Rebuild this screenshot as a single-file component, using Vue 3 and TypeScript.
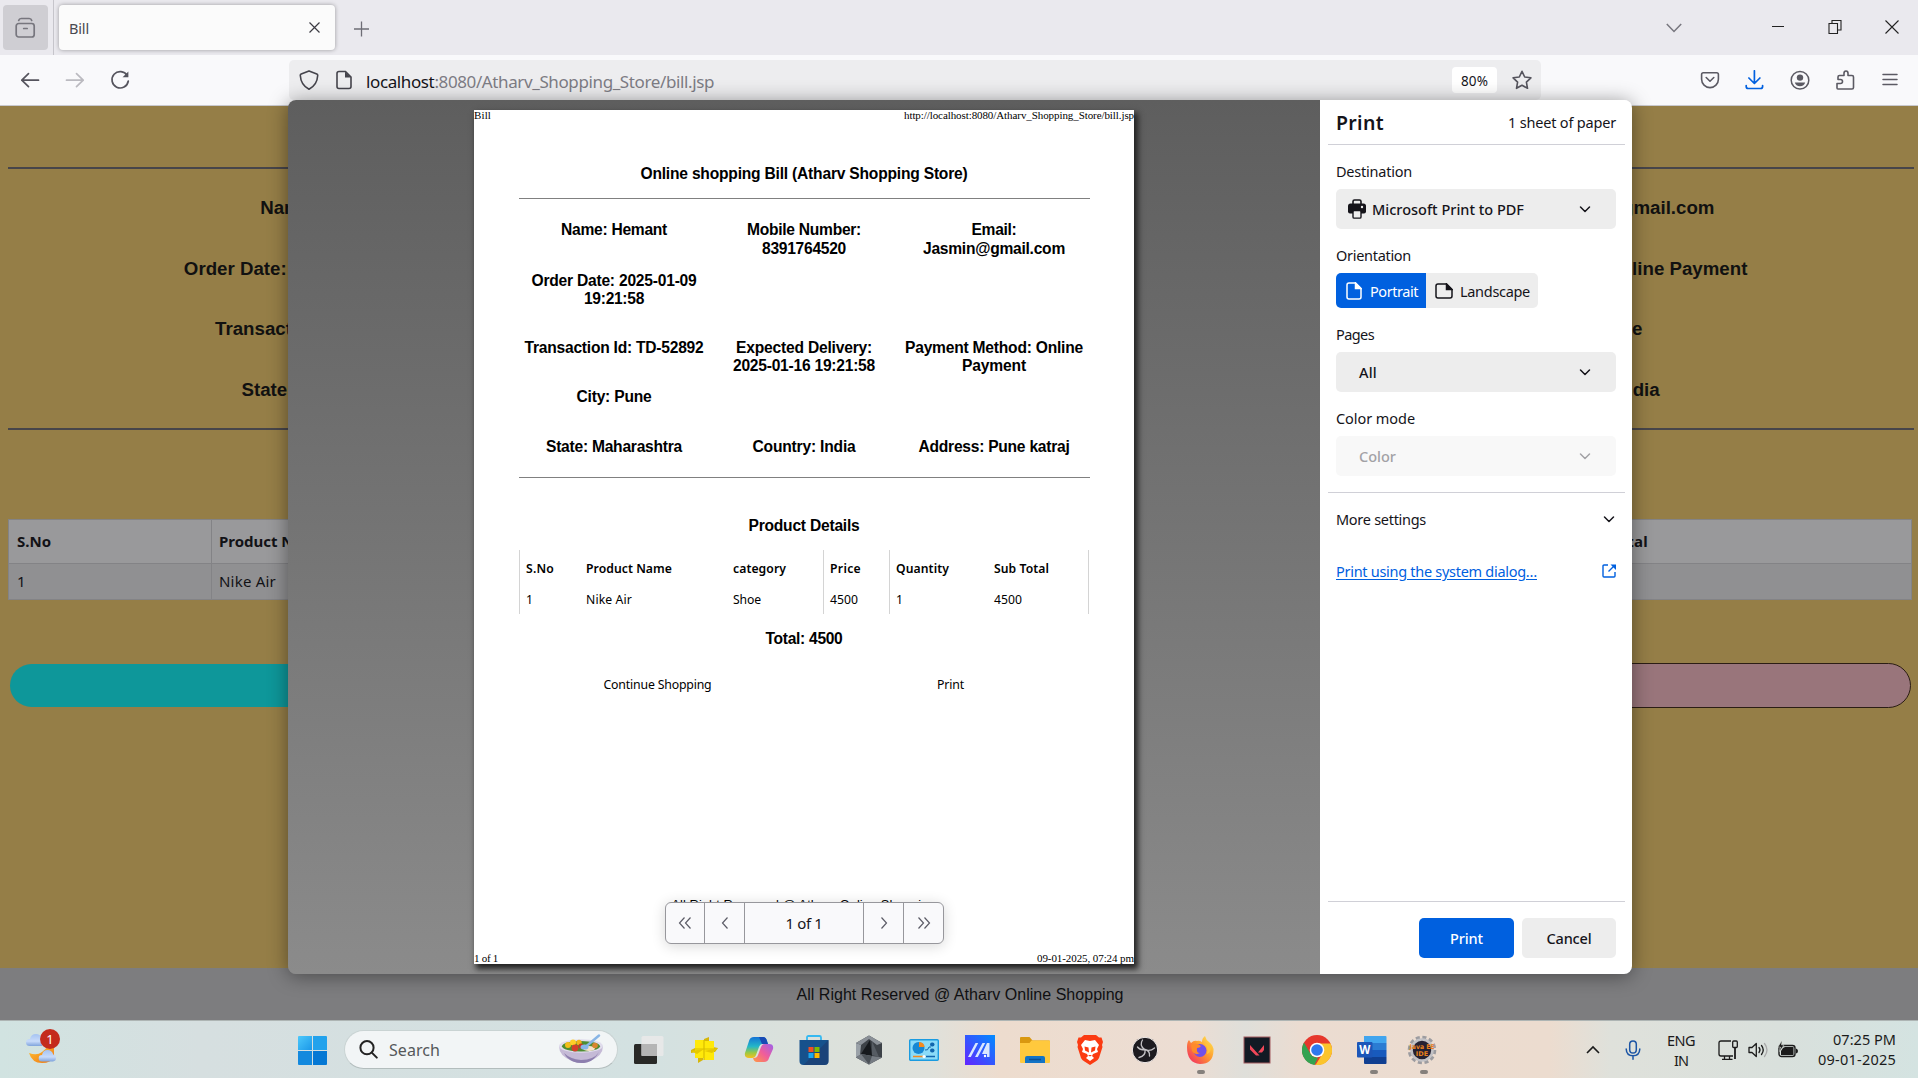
<script setup lang="ts">
import type { Directive } from 'vue'

// Tunes letter spacing so that a label takes exactly the given width in pixels.
const vFit: Directive<HTMLElement, number> = {
  mounted(el, binding) {
    const count = (el.textContent ?? '').length
    const width = el.getBoundingClientRect().width
    if (count > 0) el.style.letterSpacing = `${(binding.value - width) / count}px`
  },
}

interface Line { text: string; width: number }

const billCells: Line[][] = [
  [{ text: 'Name: Hemant', width: 106 }],
  [{ text: 'Mobile Number:', width: 114 }, { text: '8391764520', width: 84 }],
  [{ text: 'Email:', width: 45 }, { text: 'Jasmin@gmail.com', width: 142 }],
  [{ text: 'Order Date: 2025-01-09', width: 165 }, { text: '19:21:58', width: 60 }],
  [],
  [],
  [{ text: 'Transaction Id: TD-52892', width: 179 }],
  [{ text: 'Expected Delivery:', width: 136 }, { text: '2025-01-16 19:21:58', width: 142 }],
  [{ text: 'Payment Method: Online', width: 178 }, { text: 'Payment', width: 64 }],
  [{ text: 'City: Pune', width: 75 }],
  [],
  [],
  [{ text: 'State: Maharashtra', width: 136 }],
  [{ text: 'Country: India', width: 103 }],
  [{ text: 'Address: Pune katraj', width: 151 }],
]

const products = [
  { head: 'S.No', hw: 28, value: '1', vw: 6 },
  { head: 'Product Name', hw: 86, value: 'Nike Air', vw: 46 },
  { head: 'category', hw: 53, value: 'Shoe', vw: 28 },
  { head: 'Price', hw: 31, value: '4500', vw: 28 },
  { head: 'Quantity', hw: 53, value: '1', vw: 6 },
  { head: 'Sub Total', hw: 55, value: '4500', vw: 28 },
]
</script>

<template>
  <div class="screen">
    <header class="tabs">
      <div class="view-btn">
        <svg width="22" height="22" viewBox="0 0 22 22" fill="none" stroke="#77767e" stroke-width="1.7" stroke-linecap="round">
          <rect x="1.200" y="6.500" width="18" height="13.500" rx="2.500" /><path d="M3.700 3.500 Q4.200 1.500 6.200 1.500 H14.200 Q16.200 1.500 16.700 3.500" /><path d="M8.700 11.500h3.500" />
        </svg>
      </div>
      <i class="tab-sep"></i>
      <div class="tab">
        <span v-fit="20">Bill</span>
        <svg width="12" height="12" viewBox="0 0 12 12" stroke="#3c3b43" stroke-width="1.200"><path d="M1.500 .5l10 10M11.500 .5L1.500 10.500" /></svg>
      </div>
      <svg class="plus" width="16" height="16" viewBox="0 0 16 16" stroke="#6e6d76" stroke-width="1.300"><path d="M8.500 .5v15M1 8h15" /></svg>
      <svg class="list" width="16" height="10" viewBox="0 0 16 10" fill="none" stroke="#77767e" stroke-width="1.500"><path d="M.8 1l7.200 7.500L15.200 1" /></svg>
      <svg class="win min" width="14" height="14" viewBox="0 0 14 14" stroke="#222" fill="none"><path d="M1 6.500h12" /></svg>
      <svg class="win max" width="14" height="14" viewBox="0 0 14 14" stroke="#222" fill="none" stroke-width="1.100"><path d="M1 3.500h8.500v10H1zM4 3.500v-3h9v9.500H9.500" /></svg>
      <svg class="win cls" width="14" height="14" viewBox="0 0 14 14" stroke="#222" fill="none" stroke-width="1.100"><path d="M.5.5l13 13M13.500.5l-13 13" /></svg>
    </header>

    <nav class="toolbar">
      <svg width="20" height="20" viewBox="0 0 20 20" fill="none" stroke="#55545d" stroke-width="1.700" stroke-linecap="round" stroke-linejoin="round"><path d="M18.500 10.200H1.800M8.500 3.700L1.800 10.200l6.700 6.500" /></svg>
      <svg width="20" height="20" viewBox="0 0 20 20" fill="none" stroke="#bbbac0" stroke-width="1.700" stroke-linecap="round" stroke-linejoin="round"><path d="M1.500 10.200h16.700M11.500 3.700l6.700 6.500-6.700 6.500" /></svg>
      <svg width="20" height="20" viewBox="0 0 20 20" fill="none" stroke="#55545d" stroke-width="1.700" stroke-linecap="round"><path d="M17.200 5.500A8.200 8.200 0 1 0 18.300 11" /><path d="M18.400 1.500v5.800h-5.800z" fill="#55545d" stroke="none" /></svg>
      <div class="url">
        <svg width="20" height="20" viewBox="0 0 20 20" fill="none" stroke="#45444c" stroke-width="1.600" stroke-linejoin="round"><path d="M10 .9L17.800 4q1 .5 .9 1.500-.5 9.500-8.700 13.700Q1.800 15 1.300 5.500 1.200 4.500 2.200 4z" /></svg>
        <svg class="doc" width="20" height="20" viewBox="0 0 20 20" fill="none" stroke="#45444c" stroke-width="1.600"><path d="M11.500 1.500H5q-2 0-2 2v13q0 2 2 2h10q2 0 2-2V7z" /><path d="M11 1.500l6 6h-6z" fill="#45444c" stroke="none" /></svg>
        <span v-fit="348" class="addr"><b>localhost</b>:8080/Atharv_Shopping_Store/bill.jsp</span>
        <span class="zoom"><span v-fit="27">80%</span></span>
        <svg width="20" height="20" viewBox="0 0 20 20" fill="none" stroke="#55545d" stroke-width="1.600" stroke-linejoin="round"><path d="M10 1.300l2.700 5.700 6.200.8-4.500 4.300 1.100 6.200L10 15.300l-5.500 3 1.100-6.200L1.100 7.800 7.300 7z" /></svg>
      </div>
      <svg class="t1" width="20" height="20" viewBox="0 0 20 20" fill="none" stroke="#5b5a63" stroke-width="1.600" stroke-linecap="round" stroke-linejoin="round"><path d="M3.300 2.700h13.400q1.700 0 1.700 1.700v4.800a8.400 8.400 0 0 1-16.800 0V4.400q0-1.700 1.700-1.700z" /><path d="M6.200 7.500L10 11.200l3.800-3.700" /></svg>
      <svg class="t2" width="20" height="20" viewBox="0 0 20 20" fill="none" stroke="#0060df" stroke-width="1.700" stroke-linecap="round" stroke-linejoin="round"><path d="M10.400 .8v12.500M4.900 8l5.500 5.500L15.900 8M2.200 15.500v1q0 2 2 2h12.400q2 0 2-2v-1" /></svg>
      <svg class="t3" width="20" height="20" viewBox="0 0 20 20" fill="none" stroke="#5b5a63" stroke-width="1.500"><circle cx="10" cy="10.200" r="8.800" /><circle cx="10" cy="7.600" r="3.200" fill="#5b5a63" stroke="none" /><path d="M4.800 12.500h10.400q-1 3.700-5.200 3.700t-5.200-3.700z" fill="#5b5a63" stroke="none" /></svg>
      <svg class="t4" width="20" height="20" viewBox="0 0 20 20" fill="none" stroke="#5b5a63" stroke-width="1.600" stroke-linejoin="round"><path d="M3 19h14q1.500 0 1.500-1.500V7q0-1.500-1.500-1.500h-4V3.300q0-2.300-2-2.300t-2 2.300v2.200H4.500Q3 5.500 3 7v2.500h2.500q2 0 2 2t-2 2H2V18q0 1 1 1z" /></svg>
      <svg class="t5" width="20" height="20" viewBox="0 0 20 20" stroke="#5b5a63" stroke-width="1.500" stroke-linecap="round"><path d="M3 4.500h14M3 9.500h14M3 14.500h14" /></svg>
    </nav>

    <main class="page">
      <div class="rule first"></div>
      <div class="facts">
        <h3>Name: Hemant</h3><h3></h3><h3>Email: Jasmin@gmail.com</h3>
        <h3>Order Date: 2025-01-09 19:21:58</h3><h3></h3><h3>Payment Method: Online Payment</h3>
        <h3>Transaction Id: TD-52892</h3><h3></h3><h3>City: Pune</h3>
        <h3>State: Maharashtra</h3><h3></h3><h3>Country: India</h3>
      </div>
      <div class="rule"></div>
      <div class="wide-table">
        <div class="wr head"><span><em v-fit="34">S.No</em></span><span><em v-fit="107">Product Name</em></span><span></span><span><em v-fit="71">Sub Total</em></span></div>
        <div class="wr"><span>1</span><span><em v-fit="57">Nike Air</em></span><span></span><span></span></div>
      </div>
      <div class="pills"><div class="pill teal"></div><div class="pill pink"></div></div>
      <footer class="foot"><span v-fit="327">All Right Reserved @ Atharv Online Shopping</span></footer>
    </main>

    <section class="dialog">
      <div class="preview">
        <article class="paper">
          <div class="edge"><span v-fit="17">Bill</span><span v-fit="230">http://localhost:8080/Atharv_Shopping_Store/bill.jsp</span></div>
          <div class="sheet">
            <h4 class="title"><span v-fit="327">Online shopping Bill (Atharv Shopping Store)</span></h4>
            <div class="hr"></div>
            <div class="cells">
              <div v-for="(cell, i) in billCells" :key="i" class="cell">
                <div v-for="line in cell" :key="line.text"><span v-fit="line.width">{{ line.text }}</span></div>
              </div>
            </div>
            <div class="hr"></div>
            <h4 class="details"><span v-fit="111">Product Details</span></h4>
            <div class="ptable">
              <div v-for="p in products" :key="p.head" class="pcol">
                <div class="ph"><span v-fit="p.hw">{{ p.head }}</span></div>
                <div class="pv"><span v-fit="p.vw">{{ p.value }}</span></div>
              </div>
            </div>
            <h4 class="total"><span v-fit="77">Total: 4500</span></h4>
            <div class="actions"><div><span v-fit="108">Continue Shopping</span></div><div><span v-fit="27">Print</span></div></div>
            <div class="rights"><span v-fit="264">All Right Reserved @ Atharv Online Shopping</span></div>
          </div>
          <div class="edge low"><span v-fit="24">1 of 1</span><span v-fit="97">09-01-2025, 07:24 pm</span></div>
        </article>
        <div class="pager">
          <span><svg width="14" height="14" viewBox="0 0 14 14"><path d="M6.500 1.500L1.500 7l5 5.500M12.500 1.500l-5 5.500 5 5.500" /></svg></span>
          <span><svg width="14" height="14" viewBox="0 0 14 14"><path d="M9.500 1.500L4.500 7l5 5.500" /></svg></span>
          <span class="mid"><em v-fit="37">1 of 1</em></span>
          <span><svg width="14" height="14" viewBox="0 0 14 14"><path d="M4.500 1.500l5 5.500-5 5.500" /></svg></span>
          <span><svg width="14" height="14" viewBox="0 0 14 14"><path d="M1.500 1.500l5 5.500-5 5.500M7.500 1.500l5 5.500-5 5.500" /></svg></span>
        </div>
      </div>

      <aside class="panel">
        <div class="phead"><h2><span v-fit="48">Print</span></h2><span v-fit="108">1 sheet of paper</span></div>
        <div class="form">
          <label class="l1"><span v-fit="76">Destination</span></label>
          <div class="select dest">
            <svg width="18" height="20" viewBox="0 0 18 20"><path d="M5 5V2.500Q5 1 6.500 1h5Q13 1 13 2.500V5" fill="none" stroke="#15141a" stroke-width="1.600" /><path d="M2.500 4.500h13Q18 4.500 18 7v5.500q0 2-2 2H2q-2 0-2-2V7q0-2.500 2.500-2.500z" fill="#15141a" /><rect x="5" y="11.500" width="8" height="7.600" rx="1.200" fill="#eee" stroke="#15141a" stroke-width="1.400" /><circle cx="14" cy="8" r="1.200" fill="#eee" /></svg>
            <span v-fit="152">Microsoft Print to PDF</span>
            <svg class="chev" width="12" height="8" viewBox="0 0 12 8"><path d="M1.500 2L6 6.500l4.500-4.500" /></svg>
          </div>
          <label class="l2"><span v-fit="75">Orientation</span></label>
          <div class="orient">
            <div class="on"><svg width="16" height="18" viewBox="0 0 16 18" fill="none" stroke="#fff" stroke-width="1.500"><path d="M9.500 1H3Q1 1 1 3v12q0 2 2 2h10q2 0 2-2V6.500z" /><path d="M9.500 1l5.500 5.500H9.500z" fill="#fff" /></svg><span v-fit="48">Portrait</span></div>
            <div class="off"><svg width="18" height="16" viewBox="0 0 18 16" fill="none" stroke="#15141a" stroke-width="1.500"><path d="M11.500 1H3Q1 1 1 3v10q0 2 2 2h12q2 0 2-2V6.500z" /><path d="M11.500 1L17 6.500h-5.500z" fill="#15141a" /></svg><span v-fit="70">Landscape</span></div>
          </div>
          <label class="l3"><span v-fit="38">Pages</span></label>
          <div class="select plain"><span v-fit="18">All</span><svg class="chev" width="12" height="8" viewBox="0 0 12 8"><path d="M1.500 2L6 6.500l4.500-4.500" /></svg></div>
          <label class="l4"><span v-fit="79">Color mode</span></label>
          <div class="select plain disabled"><span v-fit="37">Color</span><svg class="chev" width="12" height="8" viewBox="0 0 12 8"><path d="M1.500 2L6 6.500l4.500-4.500" /></svg></div>
        </div>
        <div class="more"><span v-fit="90">More settings</span><svg class="chev" width="12" height="8" viewBox="0 0 12 8"><path d="M1.500 2L6 6.500l4.500-4.500" /></svg></div>
        <div class="sys"><a v-fit="201">Print using the system dialog…</a><svg width="14" height="14" viewBox="0 0 14 14" fill="none" stroke="#0060df" stroke-width="1.400"><path d="M6 1H2Q1 1 1 2v10q0 1 1 1h10q1 0 1-1V8M6.500 7.500L12 2" /><path d="M8.500.5H14V6z" fill="#0060df" stroke="none" /></svg></div>
        <div class="buttons"><div class="btn primary"><span v-fit="33">Print</span></div><div class="btn"><span v-fit="45">Cancel</span></div></div>
      </aside>
    </section>

    <footer class="taskbar">
      <svg class="weather" width="36" height="44" viewBox="0 0 36 44">
        <defs>
          <linearGradient id="cloud" x1="0" y1="0" x2="0" y2="1"><stop offset="0" stop-color="#a5c3f2" /><stop offset=".6" stop-color="#c8dbfa" /><stop offset="1" stop-color="#7fa3dc" /></linearGradient>
          <linearGradient id="moon" x1="0" y1="0" x2="1" y2="1"><stop offset="0" stop-color="#ffc233" /><stop offset="1" stop-color="#ee7413" /></linearGradient>
        </defs>
        <path d="M4 27q8 3 13-1 4-3 5-5h7v10q-3 6-12 6Q7 37 4 27z" fill="url(#moon)" />
        <path d="M5 20q-4 0-4-3.500T5 13q1-5 6-5 4 0 6 4v8z" fill="url(#cloud)" />
        <path d="M17 35.500q-3.300 0-3.300-3.300T17 29q1-5 5.500-5t5.700 4.500q2.800.5 2.800 3.500t-3 3.500z" fill="url(#cloud)" />
        <circle cx="25" cy="13" r="10" fill="#c42b1c" />
        <text x="25" y="17.800" font-size="13" fill="#fff" text-anchor="middle" font-family="Noto Sans">1</text>
      </svg>
      <svg class="start" width="29" height="29" viewBox="0 0 29 29">
        <defs><linearGradient id="win" x1="0" y1="0" x2="1" y2="1" gradientUnits="objectBoundingBox"><stop offset="0" stop-color="#4cc8fb" /><stop offset="1" stop-color="#1b98e8" /></linearGradient></defs>
        <path d="M1 0h13v14H0V1q0-1 1-1z" fill="url(#win)" /><path d="M15 0h13q1 0 1 1v13H15z" fill="#22a2ec" /><path d="M0 15h14v14H1q-1 0-1-1z" fill="#1389de" /><path d="M15 15h14v13q0 1-1 1H15z" fill="#0578d4" />
      </svg>
      <div class="search">
        <svg width="19" height="19" viewBox="0 0 19 19" fill="none" stroke="#222" stroke-width="2" stroke-linecap="round"><circle cx="8" cy="7.700" r="6.600" /><path d="M12.800 12.600l5 5" /></svg>
        <span v-fit="51">Search</span>
        <svg class="bowl" width="46" height="30" viewBox="0 0 46 30">
          <path d="M1 12q0 10 13 15 9 3.500 18 0 13-5 13-15z" fill="#c5bad6" /><path d="M6 19q6 6 17 7 13 0 18-8-5 9-12 10.500-8 1.500-14-1Q9 25 6 19z" fill="#8d7fae" />
          <ellipse cx="23" cy="12" rx="22" ry="6.800" fill="#e0dcec" /><ellipse cx="23" cy="12.300" rx="19" ry="5.200" fill="#4e8d32" />
          <circle cx="10" cy="11" r="3" fill="#f2bd1a" /><circle cx="15" cy="8.500" r="3" fill="#ffd028" /><circle cx="21" cy="8.500" r="2.700" fill="#f2b51a" /><circle cx="17" cy="14" r="3.400" fill="#d4402b" /><circle cx="23" cy="12" r="2.600" fill="#c33a2b" /><ellipse cx="31" cy="14.500" rx="6" ry="2.600" fill="#f7e2c8" /><circle cx="37" cy="11.500" r="2.800" fill="#d9862e" />
          <path d="M41 1.500L28 12.500" stroke="#88b5e6" stroke-width="2.400" stroke-linecap="round" /><ellipse cx="26.500" cy="13" rx="4" ry="2.600" fill="#86b6ea" />
        </svg>
      </div>
      <div class="apps">
        <svg viewBox="0 0 30 30"><rect y="9" width="23" height="20" rx="1.500" fill="#292927" /><rect x="7.500" y="1" width="22" height="20" rx="1.500" fill="#e9e9e9" opacity=".9" /><path d="M7.500 9H23v12H7.500z" fill="#b5b5b5" /></svg>
        <svg viewBox="0 0 30 30"><path d="M15 4l5-2v6h-5zM2 15l6-3v5l-6 1zM9 22h5v3l-5 3zM24 12l5 1-3 4h-3z" fill="#d6b60a" /><path d="M6 5h9v6H6zM6 11h19v9H6zM6 20h9v3H6zM15 6h10v6H15zM15 19h10v6H15z" fill="#ffe90a" /><path d="M15 5v20M6 14h19" stroke="#d9bf00" stroke-width="1.200" /><path d="M2 16l13-2-7 5zM29 13l-14 3 8 2z" fill="#e6c800" /></svg>
        <svg viewBox="0 0 30 30">
          <defs><linearGradient id="co1" x1="0" y1="0" x2="0" y2="1"><stop offset="0" stop-color="#1473d6" /><stop offset=".45" stop-color="#24b7c8" /><stop offset=".75" stop-color="#9bc944" /><stop offset="1" stop-color="#f8bf1c" /></linearGradient><linearGradient id="co2" x1="1" y1="0" x2="0" y2="1"><stop offset="0" stop-color="#9d61eb" /><stop offset=".5" stop-color="#f05d9b" /><stop offset="1" stop-color="#ff9a42" /></linearGradient></defs>
          <path d="M10 2h9q3 0 4 4l1 3h-6q-2 0-3 3l-3 8q-1 3-4 3H5q-5 0-4-5L5 6q1-4 5-4z" fill="url(#co1)" />
          <path d="M20 27h-7q-3 0-4-4h1q3 0 4-3l3-8q1-3 4-3h4q5 0 4 5l-4 9q-1 4-5 4z" fill="url(#co2)" />
          <path d="M15 2h4q3 0 4 4l1 3h-6z" fill="#184ab4" />
        </svg>
        <svg viewBox="0 0 30 30"><path d="M8 6V2.500Q8 1 9.500 1h11Q22 1 22 2.500V6" fill="none" stroke="#35b9f1" stroke-width="1.800" /><path d="M.5 5h29v21q0 4-4 4h-21q-4 0-4-4z" fill="#16518c" /><path d="M29.500 5v21q0 4-4 4h-21z" fill="#203b6c" opacity=".6" /><path d="M9.500 12h5v5h-5z" fill="#f25022" /><path d="M15.500 12h5v5h-5z" fill="#7fba00" /><path d="M9.500 18h5v5h-5z" fill="#18a8f0" /><path d="M15.500 18h5v5h-5z" fill="#ffb900" /></svg>
        <svg viewBox="0 0 30 30"><path d="M15 .5L28 8v14.500L15 29.500 2 22.500V8z" fill="#3d4248" /><path d="M15 .5L28 8l-5 2-8-6-8 6-5-2z" fill="#8a9097" /><path d="M2 8l5 2-1 10-4 2.500z" fill="#9aa1a8" /><path d="M18 6l7 16-7-2z" fill="#565c63" /><path d="M16 5L7 19l11 2z" fill="#16191d" /><path d="M2 22.500L7 19l11 2 10 1.500-13 7z" fill="#767c83" /><path d="M7 19l11 2-3 8.500z" fill="#4c5258" /></svg>
        <svg viewBox="0 0 30 30"><rect x=".7" y="4.700" width="28.600" height="20.600" rx="1" fill="#8bdbf8" stroke="#1a9be0" stroke-width="1.400" /><circle cx="9.500" cy="13" r="6" fill="#1688d4" /><path d="M10 12V7q5.500.5 5.500 5z" fill="#f58a1f" /><path d="M16 15q3 1 4-3h2" stroke="#1266ae" fill="none" /><rect x="21" y="7.500" width="4.500" height="4" rx="2" fill="#1266ae" /><rect x="21" y="13.500" width="4.500" height="4" rx="2" fill="#1266ae" /><path d="M4 21.500h11" stroke="#f58a1f" stroke-width="1.500" /><path d="M17 21.500h9" stroke="#1266ae" stroke-width="1.500" /><circle cx="15" cy="21.500" r="1.500" fill="#fff" /></svg>
        <svg viewBox="0 0 30 30"><defs><linearGradient id="asus" x1="1" y1="0" x2="0" y2="1"><stop offset="0" stop-color="#008cff" /><stop offset="1" stop-color="#6324ff" /></linearGradient></defs><path d="M0 0h30v30H0z" fill="url(#asus)" /><path d="M3 22L10.500 8h2.700L5.800 22zM10 22l7.500-14h2.700L12.800 22z" fill="#d9e7ff" /><path d="M17 19l5-11h2.500v14h-2.500v-3z" fill="#d9e7ff" /><circle cx="20" cy="21" r="1.200" fill="#fff" /></svg>
        <svg viewBox="0 0 30 30"><path d="M0 3q0-1 1-1h8.500l3 3.500H29q1 0 1 1V13H0z" fill="#d99810" /><path d="M0 8h9.500l2-2.500H29q1 0 1 1V27q0 1-1 1H1q-1 0-1-1z" fill="#ffc93d" /><path d="M5 28v-5q0-2 2-2h16q2 0 2 2v5z" fill="#1374c6" /><path d="M9 24.500h12" stroke="#0c4f91" stroke-width="1.500" /></svg>
        <svg viewBox="0 0 30 30"><path d="M9 0h12l3 2.500h2.500L28 7l-1 3 .5 2-3.500 11q-1 2-3.500 3.500L15 30l-5.500-3.500Q7 25 6 23L2.500 12 3 10 2 7l1.500-4.500H6z" fill="#fb3b12" /><path d="M15 6l5-1 4 5-2 4 1 3-5 2-1 2 2 2-4 3-4-3 2-2-1-2-5-2 1-3-2-4 4-5z" fill="#fff" /><path d="M9.500 11.500l4 1 .5 5-4-2zM20.500 11.500l-4 1-.5 5 4-2zM13 20h4l-2 1.500z" fill="#fb3b12" /></svg>
        <svg viewBox="0 0 30 30"><circle cx="15" cy="15" r="12.700" fill="#1d1b20" stroke="#f5efed" stroke-width="1" /><path d="M12.500 5q-3.500 5 2 9.500M15 14.500q5 2.500 9.500-1.500M15 14.500q1 6.500-6 8M15 14.500q5 1 4.500 6.500M15 14.500q-5 1-7.500-2.500" fill="none" stroke="#c3c1c4" stroke-width="1.300" stroke-linecap="round" /></svg>
        <svg viewBox="0 0 30 30"><defs><linearGradient id="ff" x1="1" y1="0" x2="0" y2="1"><stop offset="0" stop-color="#fff25a" /><stop offset=".45" stop-color="#ff9a2e" /><stop offset="1" stop-color="#f01d6b" /></linearGradient></defs><path d="M2 12q0-5 2-7l2 3q3-3 6-2 2-1 5 1 0-4 3-6 1 4 4 6 5 4 4.500 9Q28 29 15 29 2 28 2 12z" fill="url(#ff)" /><circle cx="15" cy="15.500" r="6.500" fill="#7250e8" /><path d="M6 10q5-3 10 1-1 2-4 2-1 5 3 5-5 3-8-2z" fill="#ff8a2a" /><path d="M19 8q5 5 3 11 5-2 4-8z" fill="#ffc43b" /></svg>
        <svg viewBox="0 0 30 30"><rect x="2" y="2" width="26" height="26" fill="#121a24" stroke="#a35b5f" /><path d="M8 10v4.500l6 6h3.500zM22 10v5l-2 2.500h-4z" fill="#f04758" /></svg>
        <svg viewBox="0 0 30 30"><circle cx="15" cy="15" r="15" fill="#e6372c" /><path d="M2 7.500l6.500 11.300Q11 23 16 22.500L12.500 30A15 15 0 0 1 2 7.500z" fill="#34a351" /><path d="M28.500 8.500H15q6 1 6.500 7 0 2-1.500 4L13.500 30A15 15 0 0 0 28.500 8.500z" fill="#fbc42c" /><circle cx="15" cy="15" r="7.300" fill="#fff" /><circle cx="15" cy="15" r="5.800" fill="#2f78ee" /></svg>
        <svg viewBox="0 0 30 30"><path d="M7 1h21.500q1 0 1 1v6H7z" fill="#41a5ee" /><path d="M7 8h22.500v7H7z" fill="#2b7cd3" /><path d="M7 15h22.500v7H7z" fill="#185abd" /><path d="M7 22h22.500v6q0 1-1 1H8q-1 0-1-1z" fill="#103f91" /><rect x="0" y="7" width="15.500" height="15.500" rx="1" fill="#1c56b8" /><text x="7.700" y="18.700" font-family="Noto Sans" font-weight="700" font-size="11.500" fill="#fff" text-anchor="middle">W</text></svg>
        <svg viewBox="0 0 30 30"><circle cx="15" cy="15" r="12.300" fill="none" stroke="#9c9ca0" stroke-width="4" stroke-dasharray="3.900 2.540" /><circle cx="15" cy="15" r="10.500" fill="#252132" stroke="#c2c2c6" stroke-width="2.600" /><text x="15" y="14" font-family="DejaVu Sans" font-size="6.500" font-weight="700" fill="#e9801c" text-anchor="middle" textLength="25" lengthAdjust="spacingAndGlyphs">Java EE</text><text x="15" y="20.500" font-family="DejaVu Sans" font-size="6.500" font-weight="700" fill="#e9801c" text-anchor="middle">IDE</text></svg>
      </div>
      <div class="dots"><i></i><i></i><i></i></div>
      <div class="tray">
        <svg width="14" height="10" viewBox="0 0 14 10" fill="none" stroke="#1b1b1b" stroke-width="1.600"><path d="M1 8l6-6 6 6" /></svg>
        <svg class="mic" width="16" height="20" viewBox="0 0 16 20" fill="none" stroke="#1c55a5" stroke-width="1.500" stroke-linecap="round"><rect x="4.700" y="1" width="6.600" height="12" rx="3.300" /><path d="M1.200 9q.3 6.800 6.800 6.800T14.800 9M8 16v3.200" /></svg>
        <div class="lang"><span v-fit="28">ENG</span><span v-fit="14">IN</span></div>
        <svg class="net" width="20" height="20" viewBox="0 0 20 20" fill="none" stroke="#1b1b1b" stroke-width="1.300"><path d="M13 1H3Q1 1 1 3v11q0 2 2 2h12M6.500 16v3M11.500 16v3M4 19.300h10.500" /><rect x="14.700" y="1" width="4.600" height="6.500" rx="1" /><path d="M17 7.500V19" stroke-width="1.800" /></svg>
        <svg class="vol" width="20" height="18" viewBox="0 0 20 18" fill="none" stroke="#1b1b1b" stroke-width="1.300" stroke-linejoin="round" stroke-linecap="round"><path d="M1 6.500h3L8.300 2.500v13L4 11.500H1zM11 6.500q2 2.500 0 5M13.500 4.500q3.500 4.500 0 9" /><path d="M16.500 2.500q5 6.500 0 13" stroke="#aaa" /></svg>
        <svg class="bat" width="20" height="18" viewBox="0 0 20 18"><rect x="1" y="4.500" width="16" height="11" rx="2.500" fill="none" stroke="#1b1b1b" stroke-width="1.400" /><path d="M5 7l2-1h8.500v8H3v-4z" fill="#1b1b1b" /><path d="M18 7.500q2 .5 2 2.500t-2 2.500z" fill="#1b1b1b" /><path d="M4 -.5L0 6h2.500L1.500 10.500 6 4H3.500z" fill="#1b1b1b" stroke="#dde2dd" stroke-width=".5" /></svg>
        <div class="clock"><span v-fit="63">07:25 PM</span><span v-fit="78">09-01-2025</span></div>
      </div>
    </footer>
  </div>
</template>

<style>
body { margin: 0; overflow: hidden; }
</style>

<style scoped>
* { box-sizing: border-box; }
.screen { width: 1918px; height: 1078px; position: relative; overflow: hidden; display: flex; flex-direction: column; font-family: "Noto Sans", sans-serif; color: #15141a; white-space: nowrap; }
svg { flex: none; display: block; }
span, em, a { display: inline-block; font-style: normal; }
h2, h3, h4 { margin: 0; }

.tabs { height: 55px; background: #eae9ee; display: flex; align-items: flex-start; flex: none; }
.view-btn { width: 45px; height: 45px; margin: 5px 0 0 3px; border-radius: 4px; background: #cfced3; display: flex; align-items: center; justify-content: center; }
.tab-sep { width: 1px; height: 55px; background: #c6c5cb; margin: 0 5px; }
.tab { width: 276px; height: 45px; margin-top: 5px; background: #fbfbfb; border-radius: 4px; box-shadow: 0 0 4px rgba(0,0,0,.35); display: flex; align-items: center; justify-content: space-between; padding: 0 15px 0 10px; font-size: 14.500px; color: #4a4950; }
.plus { margin: 20.500px 0 0 18px; }
.list { margin: 23px 0 0 1297px; }
.win { margin-top: 20px; }
.min { margin-left: 89px; }
.max { margin-left: 43px; }
.cls { margin-left: 42.500px; }

.toolbar { height: 51px; background: #f9f9fb; border-bottom: 1px solid #c9c9ce; display: flex; align-items: center; padding-left: 20px; flex: none; }
.toolbar > svg + svg { margin-left: 25px; }
.url { width: 1252px; height: 40px; margin-left: 159px; border-radius: 5px; background: #ededef; display: flex; align-items: center; padding: 0 9px 0 10px; }
.doc { margin-left: 15px; }
.addr { margin-left: 12px; font-size: 17px; color: #7d7c84; padding-top: 3px; }
.addr b { font-weight: 400; color: #15141a; }
.zoom { margin-left: auto; margin-right: 15px; width: 45px; height: 26px; border-radius: 4px; background: #fff; display: flex; align-items: center; justify-content: center; font-size: 13.500px; padding-top: 1px; }
.toolbar .t1 { margin-left: 159px; }
.toolbar .t2 { margin-left: 24px; }
.toolbar .t3 { margin-left: 26px; }

.page { height: 914px; background: #957e47; display: flex; flex-direction: column; flex: none; }
.rule { height: 2px; margin: 0 4px 0 8px; background: #47454a; flex: none; }
.rule.first { margin-top: 61px; }
.facts { display: grid; grid-template-columns: repeat(3, 1fr); grid-template-rows: repeat(4, 60.600px); height: 259px; padding: 9px 4px 0 8px; flex: none; }
.facts h3 { font: 700 18.700px/60px "Liberation Sans", Arial, sans-serif; text-align: center; color: #111; }
.wide-table { margin: 89px 6px 0 8px; height: 81px; border: 1px solid #838386; flex: none; display: flex; flex-direction: column; font-size: 15px; color: #121216; }
.wr { display: grid; grid-template-columns: 202px 400px 1fr 342px; background: #909092; height: 36px; align-items: stretch; }
.wr > span { border-left: 1px solid #838386; padding-left: 7px; line-height: 34px; }
.wr > span:first-child { border-left: 0; padding-left: 8px; }
.wr > span:nth-child(n+3) { border-left-color: transparent; }
.head { height: 44px; background: #99999b; border-bottom: 1px solid #838386; font-weight: 700; }
.wr.head > span { line-height: 43px; }
.pills { display: flex; justify-content: space-between; align-items: center; margin: 63px 7px 0 10px; height: 45px; flex: none; }
.pill { width: 700px; border-radius: 23px; }
.teal { height: 43px; background: #0e979a; }
.pink { height: 45px; background: #99757b; border: 1px solid #2b1d14; }
.foot { margin-top: auto; height: 52px; background: #7d7d7f; font: 16px/54px "Liberation Sans", Arial, sans-serif; color: #101012; text-align: center; padding-left: 2px; }

.dialog { position: absolute; left: 288px; top: 100px; width: 1344px; height: 874px; border-radius: 8px; overflow: hidden; display: flex; box-shadow: 0 2px 20px rgba(0,0,0,.42); }
.preview { position: relative; width: 1032px; height: 874px; background: linear-gradient(#5e5e5e, #8b8b8b); padding: 10px 0 0 186px; }
.paper { width: 660px; height: 854px; background: #fff; box-shadow: 3px 4px 6px 1px #222; display: flex; flex-direction: column; color: #000; }
.edge { height: 11px; display: flex; justify-content: space-between; font: 11px/11px "Liberation Serif", "Times New Roman", serif; flex: none; }
.sheet { margin: 40px 44px 38px 45px; flex: 1; display: flex; flex-direction: column; font: 700 15.600px/24px "Liberation Sans", Arial, sans-serif; text-align: center; }
.sheet h4 { font-size: 15.600px; height: 24px; padding-right: 1px; flex: none; }
.hr { height: 1px; background: #808080; flex: none; }
.title { line-height: 25px; margin-bottom: 13px; }
.cells { display: grid; grid-template-columns: repeat(3, 190px); grid-template-rows: 50.500px 67px 49.500px 49.500px 39.500px; margin-top: 22px; line-height: 18.800px; flex: none; }
.details { margin-top: 36px; }
.ptable { margin-top: 12px; height: 64px; display: grid; grid-template-columns: 60px 147px 97px 66px 98px 102px; text-align: left; font: 400 12.200px/28px "Noto Sans", sans-serif; flex: none; }
.pcol { padding-left: 7px; }
.pcol:first-child, .pcol:nth-child(4), .pcol:nth-child(5) { border-left: 1px solid #d4d4d4; padding-left: 6px; }
.pcol:last-child { border-right: 1px solid #d4d4d4; }
.ph { height: 36px; line-height: 37px; font-weight: 600; }
.pv { height: 28px; }
.total { margin-top: 12px; line-height: 25px; }
.actions { margin-top: 25px; display: grid; grid-template-columns: 277px 277px; column-gap: 16px; font: 400 12.300px/20px "Noto Sans", sans-serif; flex: none; }
.rights { margin-top: auto; font-weight: 400; font-size: 12.800px; line-height: 20px; padding-right: 2px; }
.pager { position: absolute; left: 377px; top: 802px; width: 279px; height: 42px; border: 1px solid #97979c; border-radius: 6px; background: #f9f9fb; display: flex; box-shadow: 0 2px 14px rgba(0,0,0,.16); }
.pager > span { width: 40px; display: flex; align-items: center; justify-content: center; border-left: 1px solid #97979c; font-size: 15px; }
.pager > span:first-child { width: 38px; border-left: 0; }
.pager .mid { width: 119px; }
.pager svg { fill: none; stroke: #5b5b66; stroke-width: 1.200; }

.panel { width: 312px; background: #fff; font-size: 14.500px; display: flex; flex-direction: column; padding: 0 7px 0 8px; }
.phead { height: 45px; border-bottom: 1px solid #d0d0d7; display: flex; justify-content: space-between; align-items: center; padding: 0 9px 0 8px; }
.phead h2 { font-size: 19.500px; font-weight: 600; line-height: 44px; padding-top: 1px; }
.form { height: 348px; border-bottom: 1px solid #d0d0d7; padding: 0 9px 0 8px; display: flex; flex-direction: column; }
.form label { height: 24px; line-height: 23px; flex: none; margin-top: 15px; }
.select { height: 40px; margin-top: 5px; background: #ededed; border-radius: 5px; display: flex; align-items: center; padding: 0 25px 0 12px; font-weight: 500; flex: none; }
.dest span { margin-left: 6px; }
.plain { padding-left: 23px; }
.chev { margin-left: auto; fill: none; stroke: #15141a; stroke-width: 1.500; stroke-linecap: round; stroke-linejoin: round; }
.disabled { background: #f8f8f8; color: #a2a1a5; }
.disabled .chev { stroke: #a2a1a5; }
.orient { display: flex; height: 35px; margin-top: 5px; flex: none; }
.orient div { display: flex; align-items: center; background: #ededed; }
.orient .on { width: 90px; background: #0060df; color: #fff; border-radius: 5px 0 0 5px; padding-left: 10px; gap: 8px; }
.orient .off { width: 112px; border-radius: 0 5px 5px 0; padding-left: 9px; gap: 7px; }
.more { margin-top: 14px; height: 24px; padding: 0 10px 0 8px; display: flex; align-items: center; }
.sys { margin-top: 28px; height: 24px; padding: 0 9px 0 8px; display: flex; align-items: center; justify-content: space-between; color: #0060df; }
.sys a { text-decoration: underline; text-underline-offset: 2px; }
.buttons { margin-top: auto; height: 73px; border-top: 1px solid #d0d0d7; display: flex; justify-content: flex-end; gap: 8px; padding: 16px 9px 0 0; }
.btn { width: 94px; height: 40px; border-radius: 5px; background: #ededed; display: flex; align-items: center; justify-content: center; font-weight: 500; }
.primary { width: 95px; background: #0060df; color: #fff; }

.taskbar { position: relative; height: 58px; flex: none; border-top: 1px solid #aeb5b4; background: linear-gradient(90deg, #d1e3e1 0, #d6dfe0 200px, #d3e1e1 640px, #dbe1dc 800px, #dfe1db 930px, #eddcce 1000px, #ecddd3 1190px, #dfdfda 1245px, #ebdcd1 1300px, #ecdccf 1550px, #dfe1db 1610px, #d9e0dc 1780px, #d4e3e1 1918px); display: flex; align-items: flex-start; }
.weather { margin: 5px 0 0 25px; }
.start { margin: 15px 0 0 237px; }
.search { width: 274px; height: 39px; margin: 9px 0 0 17px; border-radius: 20px; background: #f2f5f6; border: 1px solid #c9d3d3; border-bottom-color: #b3bdbd; display: flex; align-items: center; padding: 0 13px 0 14px; font-size: 16px; color: #55585a; }
.search > span { margin-left: 11px; padding-top: 1px; }
.bowl { margin: -2px 0 0 auto; }
.apps { display: flex; margin: 14px 0 0 16px; gap: 25.100px; }
.apps svg { width: 30px; height: 30px; }
.apps svg:nth-child(12) { margin-left: 2px; }
.apps svg:nth-child(13) { margin-left: 5px; }
.apps svg:nth-child(15) { margin-left: -5px; }
.dots { position: absolute; left: 1197px; top: 49px; display: flex; }
.dots i { width: 8px; height: 4px; border-radius: 2px; background: #85807c; }
.dots i:nth-child(2) { margin-left: 165px; }
.dots i:nth-child(3) { margin-left: 42px; }
.tray { margin-left: auto; height: 57px; padding-right: 22px; display: flex; align-items: center; font-size: 14.500px; color: #1b1b1b; }
.mic { margin-left: 25px; }
.lang { margin-left: 26px; display: flex; flex-direction: column; align-items: center; line-height: 20px; padding-top: 1px; }
.net { margin-left: 23px; }
.vol { margin-left: 10px; }
.bat { margin-left: 10px; }
.clock { margin-left: 20px; display: flex; flex-direction: column; align-items: flex-end; line-height: 20px; margin-top: -2px; }
</style>
